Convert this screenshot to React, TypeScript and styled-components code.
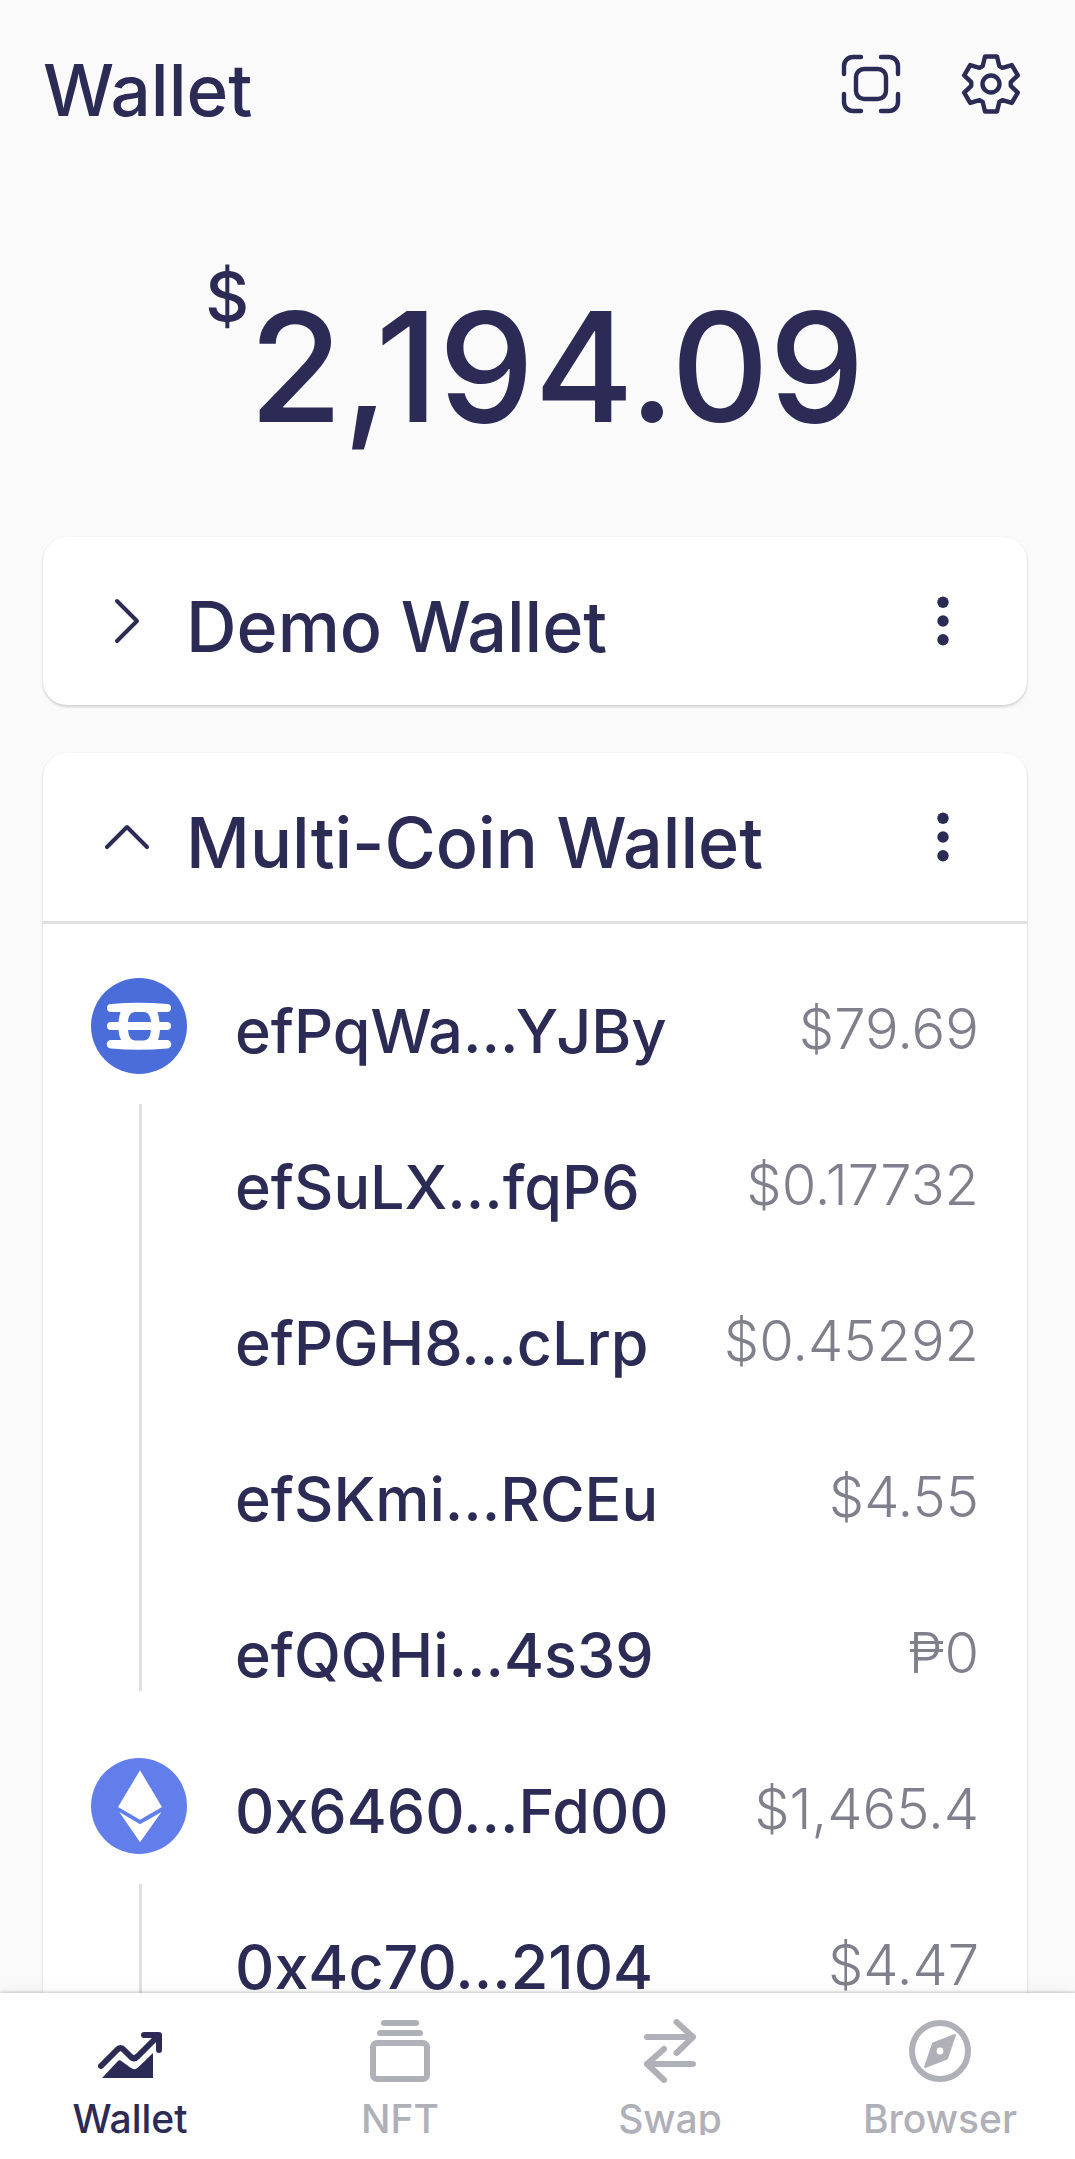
import React, { useState } from "react";
import styled, { createGlobalStyle } from "styled-components";

const navy = "#2b2b55";
const muted = "#80808c";
const inactive = "#b0b0b8";
const line = "#e0e0e0";

const GlobalStyle = createGlobalStyle`
  * { box-sizing: border-box; }
  body { margin: 0; background: #fafafa; }
  h1, h2, p, ul { margin: 0; padding: 0; font-weight: inherit; }
  button {
    margin: 0; padding: 0; border: 0; background: none;
    color: inherit; font: inherit; cursor: pointer; text-align: left;
  }
  svg { display: block; flex: none; }
`;

const Screen = styled.div`
  display: flex;
  flex-direction: column;
  height: 100vh;
  background: #fafafa;
  color: ${navy};
  font-family: Inter, "Liberation Sans", sans-serif;
  font-weight: 500;
`;

const TopBar = styled.header`
  display: flex;
  align-items: flex-start;
  justify-content: space-between;
  padding: 54px 54px 0 43px;
`;

const PageTitle = styled.h1`
  font-size: 71px;
  font-weight: 500;
  line-height: 72px;
`;

const Actions = styled.div`
  display: flex;
  gap: 60px;
`;

const Content = styled.main`
  flex: 1;
  min-height: 0;
  overflow-y: auto;
  scrollbar-width: none;
  padding: 0 48px 0 43px;
`;

const Balance = styled.p`
  display: flex;
  justify-content: center;
  padding: 134px 0 90px;
`;

const Currency = styled.span`
  font-size: 68px;
  line-height: 72px;
`;

const Amount = styled.span`
  padding-top: 27px;
  font-size: 152px;
  line-height: 160px;
`;

const WalletList = styled.div`
  display: flex;
  flex-direction: column;
  gap: 48px;
`;

const Card = styled.section`
  border-radius: 24px;
  background: #fff;
  box-shadow: 0 2px 3px rgba(0, 0, 0, 0.16), 0 0 2px rgba(0, 0, 0, 0.06);
`;

const CardHead = styled.div`
  display: flex;
  align-items: center;
  justify-content: space-between;
  height: 168px;
  padding: 0 60px;
`;

const Toggle = styled.button`
  display: flex;
  align-items: center;
  gap: 35px;
`;

const CardTitle = styled.span`
  padding-top: 12px;
  font-size: 70px;
  line-height: 72px;
  white-space: nowrap;
`;

const Accounts = styled.div`
  padding-top: 24px;
  border-top: 3px solid ${line};
`;

const Group = styled.div`
  display: grid;
  grid-template-columns: 96px 1fr;
  column-gap: 48px;
  padding: 0 48px;
`;

const Chain = styled.div`
  display: flex;
  flex-direction: column;
  align-items: center;
  padding-top: 30px;
`;

const Rail = styled.div`
  flex: 1;
  width: 3px;
  margin: 30px 0 37px 3px;
  background: ${line};
`;

const Addresses = styled.ul`
  list-style: none;
`;

const AddressRow = styled.li`
  display: flex;
  align-items: center;
  justify-content: space-between;
  height: 156px;
`;

const Address = styled.span`
  padding-top: 10px;
  font-size: 61px;
  line-height: 72px;
`;

const Value = styled.span`
  padding-top: 6px;
  color: ${muted};
  font-size: 56px;
  font-weight: 300;
  line-height: 72px;
`;

const TabBar = styled.nav`
  position: relative;
  display: flex;
  justify-content: space-between;
  padding: 26px 51px 24px 46px;
  background: #fff;
  box-shadow: 0 -1px 3px rgba(0, 0, 0, 0.2), 0 -4px 16px rgba(0, 0, 0, 0.04);
`;

const Tab = styled.a<{ $active?: boolean }>`
  display: flex;
  flex-direction: column;
  align-items: center;
  gap: 20px;
  width: 168px;
  color: ${(p) => (p.$active ? navy : inactive)};
  font-size: 39px;
  line-height: 32px;
  text-decoration: none;
`;

const TabLabel = styled.span`
  overflow: hidden;
`;

const ScanIcon = () => (
  <svg width="60" height="60" viewBox="0 0 60 60" fill="none" stroke="currentColor" strokeWidth="4.4" strokeLinecap="round">
    <path d="M3 20V12a9 9 0 0 1 9-9h8M40 3h8a9 9 0 0 1 9 9v8M57 40v8a9 9 0 0 1-9 9h-8M20 57h-8a9 9 0 0 1-9-9v-8" />
    <rect x="15" y="15" width="30" height="30" rx="8" />
  </svg>
);

const gearPoints = Array.from({ length: 6 }, (_, i) => {
  const a = (i * Math.PI) / 3;
  return [[-8.3, -18], [-6, -27.5], [6, -27.5], [8.3, -18]]
    .map(([x, y]) => `${30 + x * Math.cos(a) - y * Math.sin(a)},${30 + x * Math.sin(a) + y * Math.cos(a)}`)
    .join(" ");
}).join(" ");

const GearIcon = () => (
  <svg width="60" height="60" viewBox="0 0 60 60" fill="none" stroke="currentColor" strokeWidth="4.4" strokeLinejoin="round">
    <polygon points={gearPoints} />
    <circle cx="30" cy="30" r="8.5" />
  </svg>
);

const Chevron = ({ open }: { open: boolean }) => (
  <svg width="48" height="48" viewBox="0 0 48 48" fill="none" stroke="currentColor" strokeWidth="4" strokeLinecap="round" strokeLinejoin="round">
    <path d={open ? "M4 34 24 14l20 20" : "M14 4l20 20-20 20"} />
  </svg>
);

const MoreIcon = () => (
  <svg width="48" height="56" viewBox="0 0 48 56" fill="currentColor">
    <circle cx="24" cy="9.3" r="5.7" />
    <circle cx="24" cy="28" r="5.7" />
    <circle cx="24" cy="46.7" r="5.7" />
  </svg>
);

const EfinityLogo = () => (
  <svg width="96" height="96" viewBox="0 0 96 96">
    <circle cx="48" cy="48" r="48" fill="#4a6dda" />
    <g fill="#fff">
      <path d="M20 26Q48 23.500 76 26a4 4 0 0 1 0 8H66.500Q68 39 68.500 44H76a4 4 0 0 1 0 8H69Q68.500 58 67 62H76a4 4 0 0 1 0 8.500Q48 73 20 70.500a4 4 0 0 1 0-8.500H30Q28 58 27.500 52H20a4 4 0 0 1 0-8H27.500Q28 39 29.500 34H20a4 4 0 0 1 0-8Z" />
    </g>
    <path d="M37 44Q37.500 34 44 34h9Q59 34 60 44ZM37 52H60Q59 62.500 53 62.500H44Q38 62.500 37 52Z" fill="#4a6dda" />
  </svg>
);

const EthereumLogo = () => (
  <svg width="96" height="96" viewBox="0 0 96 96">
    <circle cx="48" cy="48" r="48" fill="#627eea" />
    <path d="M49 12.300 71 49 49 61.700 27 49ZM28.300 54 49 66.300 70.500 54 49 84.300Z" fill="#fff" />
  </svg>
);

const WalletIcon = () => (
  <svg width="64" height="64" viewBox="0 0 64 64" fill="none" stroke="currentColor" strokeWidth="6" strokeLinecap="round" strokeLinejoin="round">
    <path d="M3 47 19 31Q22.500 27 26 31L33 38Q36.500 41 40 37L60 17M46 16H61V31" />
    <path d="M4 59 19.500 42.500Q21.500 40 24 42.500L33 49Q36.500 51.500 40 48.500L55 34V59Z" fill="currentColor" stroke="none" />
  </svg>
);

const CollectionIcon = () => (
  <svg width="64" height="64" viewBox="0 0 64 64" fill="none" stroke="currentColor" strokeWidth="6" strokeLinecap="round">
    <path d="M16 4H48M12 14H52" />
    <rect x="5" y="24" width="54" height="36" rx="4" />
  </svg>
);

const SwapIcon = () => (
  <svg width="64" height="64" viewBox="0 0 64 64" fill="none" stroke="currentColor" strokeWidth="6" strokeLinecap="round" strokeLinejoin="round">
    <path d="M9 18H55M38.500 3 55 18 38.500 34M55 45H9M26 30 9 45 26 61" />
  </svg>
);

const CompassIcon = () => (
  <svg width="64" height="64" viewBox="0 0 64 64">
    <circle cx="32" cy="32" r="28" fill="none" stroke="currentColor" strokeWidth="6" />
    <path d="M47 16 39 39.500 17 48 25 24.500Z" fill="currentColor" stroke="currentColor" strokeWidth="2" strokeLinejoin="round" />
    <circle cx="32" cy="32" r="3.400" fill="#fff" />
  </svg>
);

type AccountGroup = { id: string; logo: React.ReactNode; rows: [string, string][] };

const groups: AccountGroup[] = [
  {
    id: "efinity",
    logo: <EfinityLogo />,
    rows: [
      ["efPqWa...YJBy", "$79.69"],
      ["efSuLX...fqP6", "$0.17732"],
      ["efPGH8...cLrp", "$0.45292"],
      ["efSKmi...RCEu", "$4.55"],
      ["efQQHi...4s39", "₱0"],
    ],
  },
  {
    id: "ethereum",
    logo: <EthereumLogo />,
    rows: [
      ["0x6460...Fd00", "$1,465.4"],
      ["0x4c70...2104", "$4.47"],
    ],
  },
];

const tabs = [
  { label: "Wallet", icon: <WalletIcon />, active: true },
  { label: "NFT", icon: <CollectionIcon /> },
  { label: "Swap", icon: <SwapIcon /> },
  { label: "Browser", icon: <CompassIcon /> },
];

function WalletCard({ name, accounts = [], initiallyOpen = false }: { name: string; accounts?: AccountGroup[]; initiallyOpen?: boolean }) {
  const [open, setOpen] = useState(initiallyOpen);
  return (
    <Card>
      <CardHead>
        <h2>
          <Toggle type="button" aria-expanded={open} onClick={() => setOpen(!open)}>
            <Chevron open={open} />
            <CardTitle>{name}</CardTitle>
          </Toggle>
        </h2>
        <button type="button" aria-label={`${name} options`}>
          <MoreIcon />
        </button>
      </CardHead>
      {open && accounts.length > 0 && (
        <Accounts>
          {accounts.map((group) => (
            <Group key={group.id}>
              <Chain>
                {group.logo}
                <Rail />
              </Chain>
              <Addresses>
                {group.rows.map(([address, value]) => (
                  <AddressRow key={address}>
                    <Address>{address}</Address>
                    <Value>{value}</Value>
                  </AddressRow>
                ))}
              </Addresses>
            </Group>
          ))}
        </Accounts>
      )}
    </Card>
  );
}

export default function App() {
  return (
    <Screen>
      <GlobalStyle />
      <TopBar>
        <PageTitle>Wallet</PageTitle>
        <Actions>
          <button type="button" aria-label="Scan code">
            <ScanIcon />
          </button>
          <button type="button" aria-label="Settings">
            <GearIcon />
          </button>
        </Actions>
      </TopBar>
      <Content>
        <Balance>
          <Currency>$</Currency>
          <Amount>2,194.09</Amount>
        </Balance>
        <WalletList>
          <WalletCard name="Demo Wallet" />
          <WalletCard name="Multi-Coin Wallet" accounts={groups} initiallyOpen />
        </WalletList>
      </Content>
      <TabBar>
        {tabs.map((tab) => (
          <Tab key={tab.label} href="#" $active={tab.active} aria-current={tab.active ? "page" : undefined}>
            {tab.icon}
            <TabLabel>{tab.label}</TabLabel>
          </Tab>
        ))}
      </TabBar>
    </Screen>
  );
}
